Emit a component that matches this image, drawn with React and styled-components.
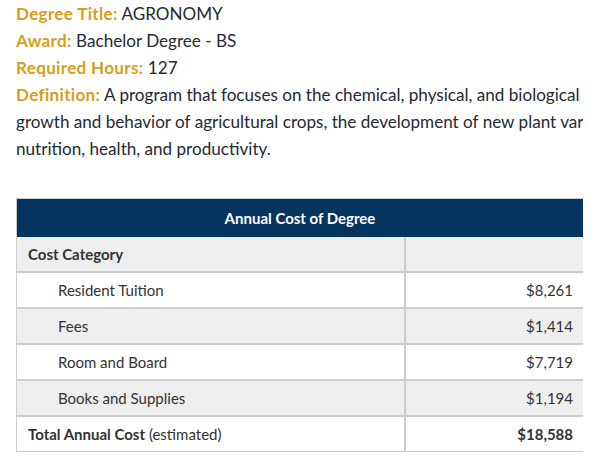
import React from 'react';
import styled, { createGlobalStyle } from 'styled-components';

const GlobalStyle = createGlobalStyle`
  html, body {
    margin: 0;
    padding: 0;
    background: #fff;
  }
  body {
    font-family: Lato, 'Liberation Sans', sans-serif;
    color: #252a33;
  }
`;

const costs = [
  { label: 'Resident Tuition', amount: '$8,261' },
  { label: 'Fees', amount: '$1,414' },
  { label: 'Room and Board', amount: '$7,719' },
  { label: 'Books and Supplies', amount: '$1,194' },
];

const App = () => {
  return (
    <>
      <GlobalStyle />
      <Page>
        <Details>
          <Line>
            <Label>Degree Title:</Label> AGRONOMY
          </Line>
          <Line>
            <Label>Award:</Label> Bachelor Degree - BS
          </Line>
          <Line>
            <Label>Required Hours:</Label> 127
          </Line>
          <Line>
            <Label>Definition:</Label> A program that focuses on the chemical, physical, and biological
            <br />
            growth and behavior of agricultural crops, the development of new plant var
            <br />
            nutrition, health, and productivity.
          </Line>
        </Details>

        <CostTable>
          <colgroup>
            <col style={{ width: 388 }} />
            <col />
          </colgroup>
          <thead>
            <tr>
              <Caption colSpan={2}>Annual Cost of Degree</Caption>
            </tr>
          </thead>
          <tbody>
            <Row shaded>
              <Cell bold>Cost Category</Cell>
              <Amount />
            </Row>
            {costs.map((c, i) => (
              <Row key={c.label} shaded={i % 2 === 1}>
                <Cell indent>{c.label}</Cell>
                <Amount>{c.amount}</Amount>
              </Row>
            ))}
            <Row>
              <Cell>
                <b>Total Annual Cost</b> (estimated)
              </Cell>
              <Amount bold>$18,588</Amount>
            </Row>
          </tbody>
        </CostTable>
      </Page>
    </>
  );
};

export default App;

const Page = styled.div`
  margin-left: 16px;
  width: 567px;
  height: 466px;
  overflow: hidden;
`;

const Details = styled.div`
  margin-bottom: 36px;
`;

const Line = styled.div`
  font-size: 17.1px;
  line-height: 27px;
  white-space: nowrap;
`;

const Label = styled.span`
  color: #d69e1a;
  font-weight: 700;
  letter-spacing: 0.3px;
`;

const CostTable = styled.table`
  width: 568px;
  table-layout: fixed;
  border-collapse: collapse;
  border: 1px solid #cccccc;
  font-size: 15px;
  color: #333333;
`;

const Caption = styled.th`
  background: #05355f;
  color: #fff;
  font-weight: 700;
  text-align: center;
  height: 38px;
  padding: 0;
`;

const Row = styled.tr`
  background: ${({ shaded }) => (shaded ? '#eeeeee' : '#ffffff')};
  border-top: 2px solid #cccccc;

  &:first-child {
    border-top: none;
  }
`;

const Cell = styled.td`
  height: 34px;
  padding: 0 10px 0 ${({ indent }) => (indent ? '41px' : '11px')};
  font-weight: ${({ bold }) => (bold ? 700 : 400)};
  border-right: 2px solid #cccccc;
  white-space: nowrap;
`;

const Amount = styled.td`
  height: 34px;
  padding: 0 10px;
  text-align: right;
  font-weight: ${({ bold }) => (bold ? 700 : 400)};
`;
